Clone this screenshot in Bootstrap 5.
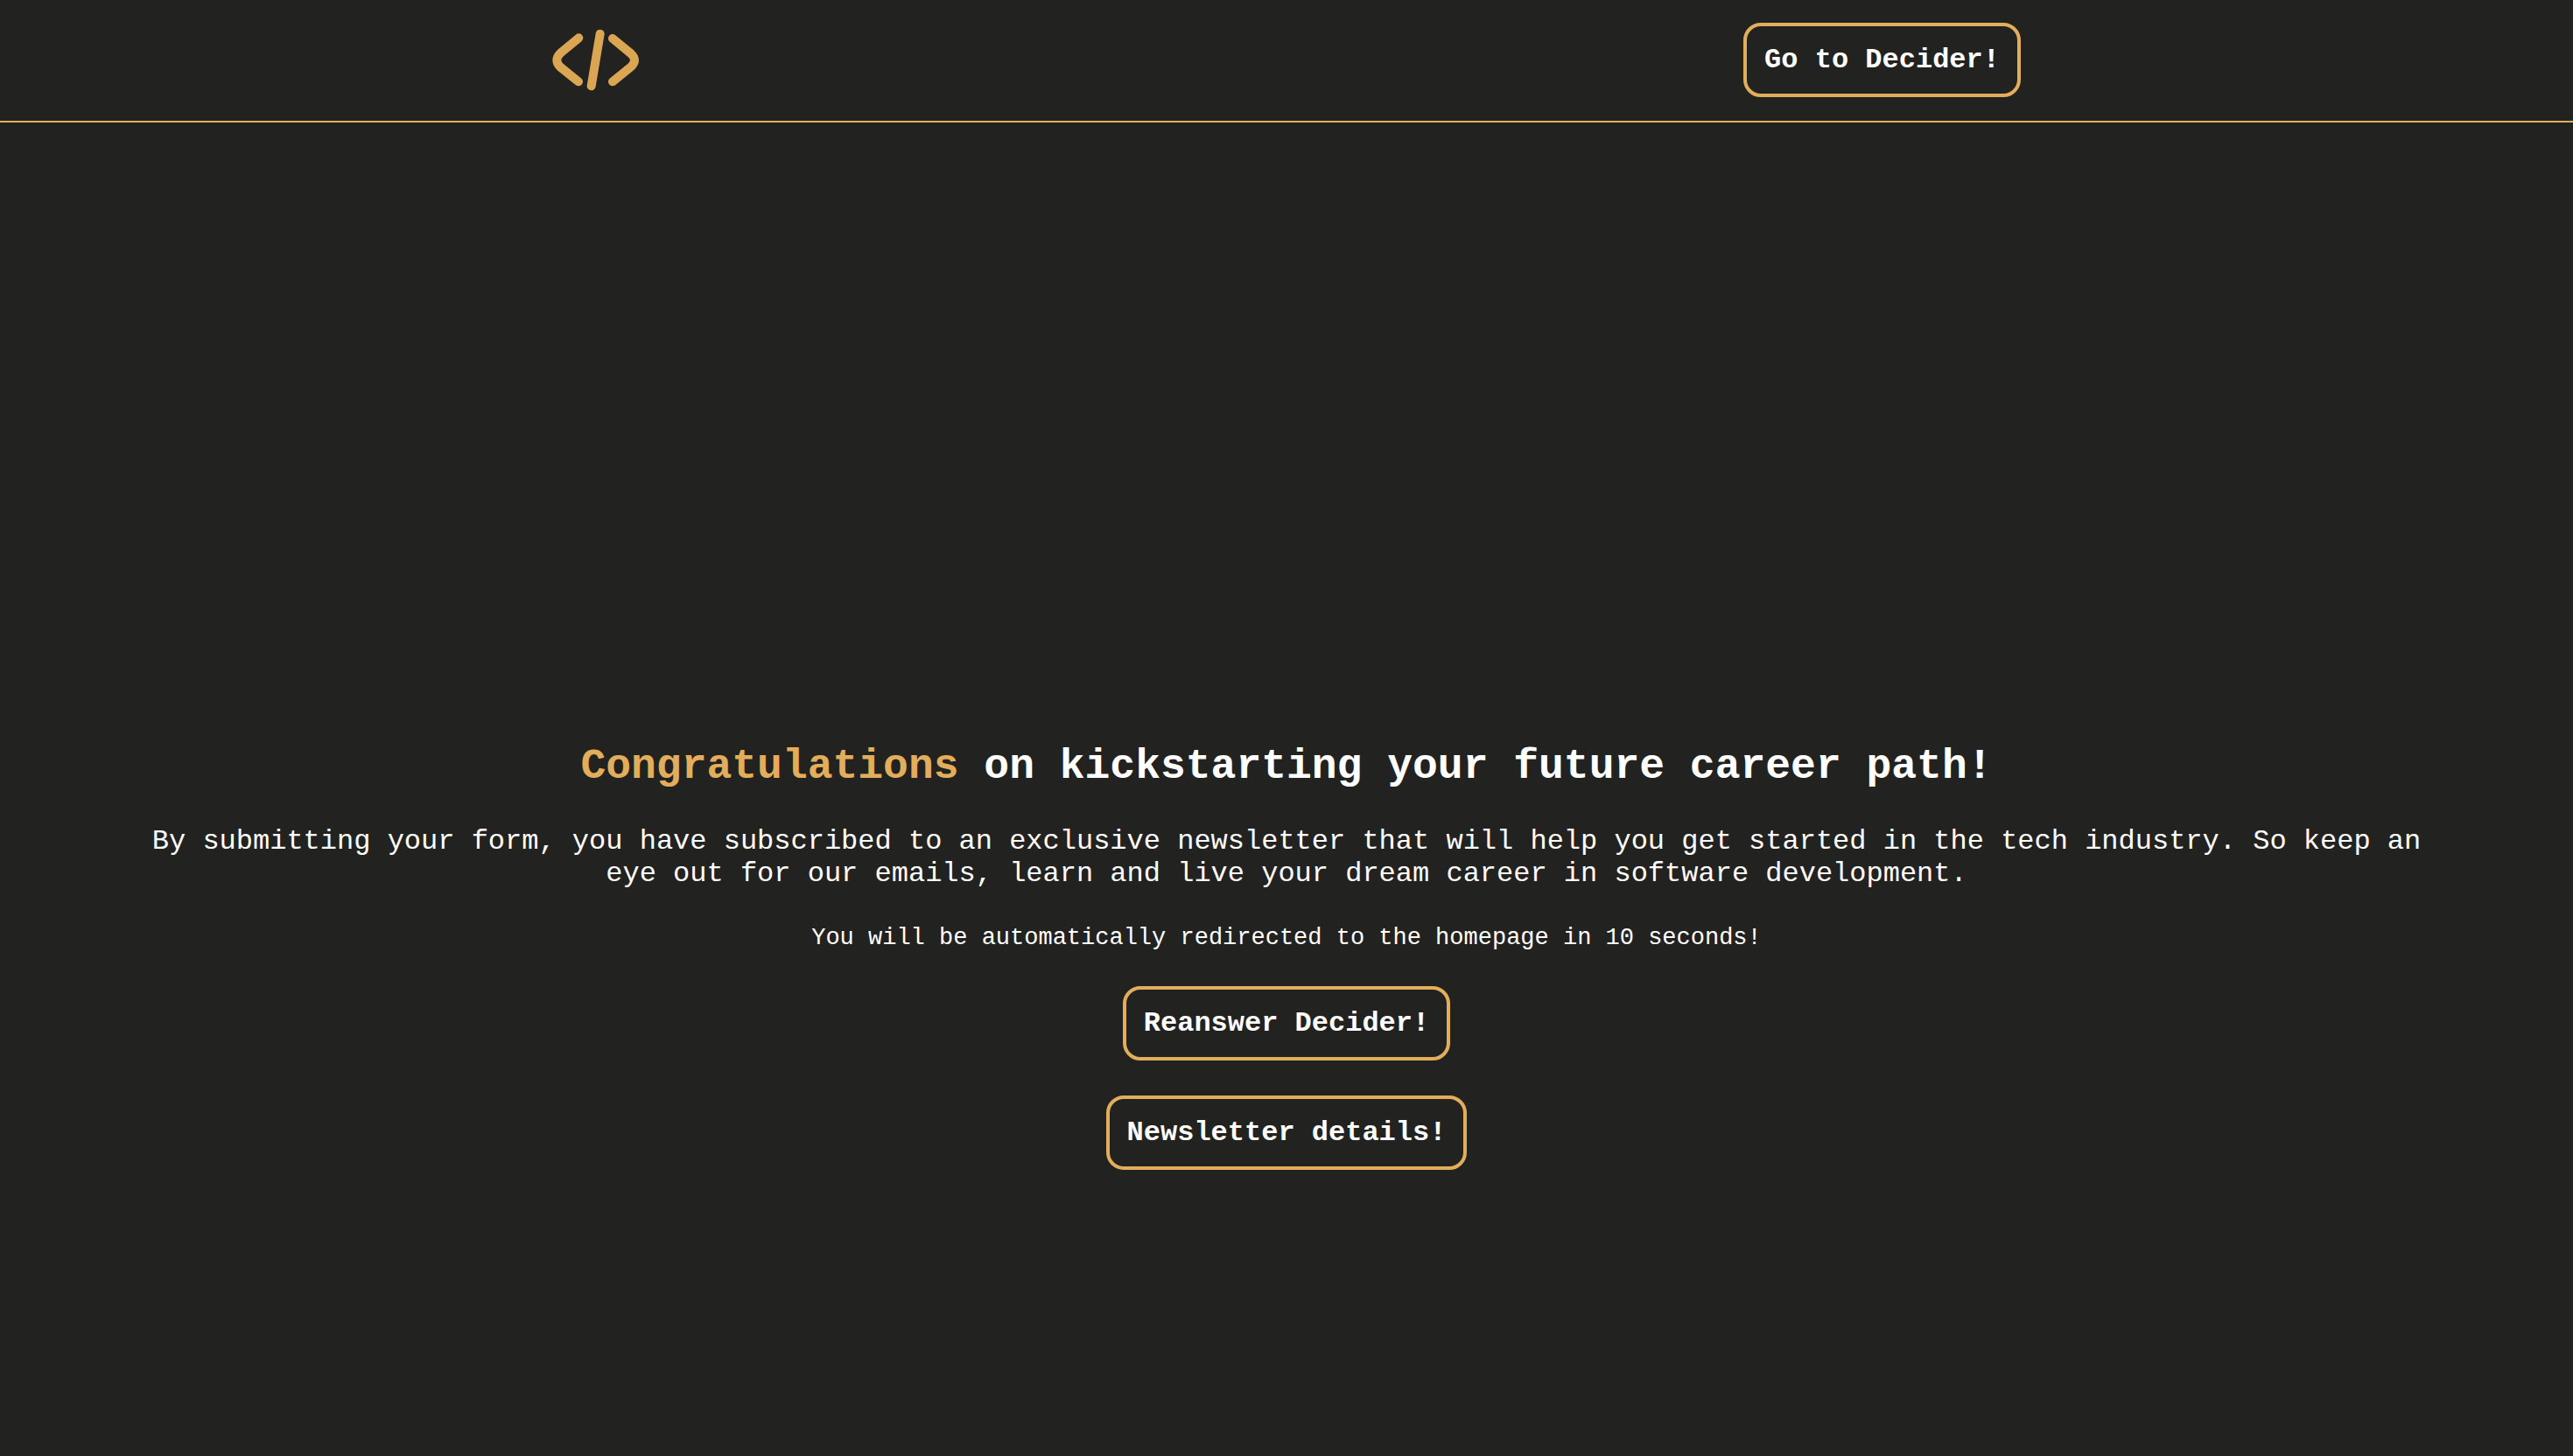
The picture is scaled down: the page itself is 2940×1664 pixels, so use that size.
<!DOCTYPE html>
<html lang="en">
<head>
<meta charset="utf-8">
<meta name="viewport" content="width=device-width, initial-scale=1">
<title>Decider</title>
<link href="https://cdn.jsdelivr.net/npm/bootstrap@5.3.0/dist/css/bootstrap.min.css" rel="stylesheet">
<style>
  :root { --gold: #e2ae5b; --ink: #222220; }
  body {
    background: var(--ink);
    color: #fff;
    font-family: "Liberation Mono", monospace;
    font-size: 32px;
    line-height: 37px;
  }
  .site-header {
    padding: 26px 0 27px;
    border-bottom: 2px solid var(--gold);
  }
  .site-logo { width: 99px; height: 70px; }
  .btn-gold {
    --bs-btn-color: #fff;
    --bs-btn-border-color: var(--gold);
    --bs-btn-border-width: 4px;
    --bs-btn-border-radius: 20px;
    --bs-btn-padding-x: 20px;
    --bs-btn-padding-y: 20px;
    --bs-btn-font-family: inherit;
    --bs-btn-font-size: 32px;
    --bs-btn-font-weight: 700;
    --bs-btn-line-height: 37px;
    --bs-btn-hover-color: var(--ink);
    --bs-btn-hover-bg: var(--gold);
    --bs-btn-hover-border-color: var(--gold);
  }
  .thanks { padding: 708px 5% 40px; }
  .thanks-title { font-size: 48px; line-height: 56px; margin-bottom: 39px; }
  .text-gold { color: var(--gold); }
  .thanks-text { margin-bottom: 39px; }
  .thanks-note { font-size: 27px; line-height: 32px; margin-bottom: 39px; }
  .thanks-actions { gap: 40px; }
</style>
</head>
<body>
<header class="site-header d-flex justify-content-around align-items-center">
  <a href="#" class="d-flex" aria-label="Home">
    <svg class="site-logo" viewBox="95 101 295 210" fill="none" stroke="#dba654" stroke-width="30" stroke-linecap="round" aria-hidden="true">
      <path d="M185 129L122 181Q98 205 122 229L184 279"/>
      <path d="M258 115L228 294"/>
      <path d="M301 131L364 183Q388 205 364 228L301 279"/>
    </svg>
  </a>
  <button type="button" class="btn btn-gold">Go to Decider!</button>
</header>
<main class="thanks d-flex flex-column align-items-center text-center">
  <h1 class="thanks-title fw-bold"><span class="text-gold">Congratulations</span> on kickstarting your future career path!</h1>
  <p class="thanks-text">By submitting your form, you have subscribed to an exclusive newsletter that will help you get started in the tech industry. So keep an eye out for our emails, learn and live your dream career in software development.</p>
  <p class="thanks-note">You will be automatically redirected to the homepage in 10 seconds!</p>
  <div class="thanks-actions d-flex flex-column align-items-center">
    <button type="button" class="btn btn-gold">Reanswer Decider!</button>
    <button type="button" class="btn btn-gold">Newsletter details!</button>
  </div>
</main>
<script src="https://cdn.jsdelivr.net/npm/bootstrap@5.3.0/dist/js/bootstrap.bundle.min.js"></script>
</body>
</html>
